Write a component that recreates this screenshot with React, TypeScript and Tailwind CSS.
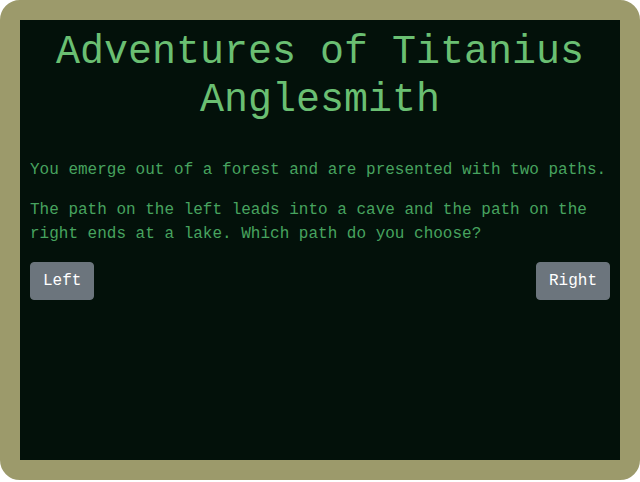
import React from 'react'

const mono = { fontFamily: '"Liberation Mono", "Courier New", monospace' }

export default function App() {
  return (
    <div
      className="w-[640px] h-[480px] rounded-[20px] border-[20px] border-[#9c9a6b] bg-[#03110a] px-[10px] pt-[9px]"
      style={mono}
    >
      <h1 className="text-center text-[40px] leading-[48px] text-[#6abf72] mb-[33px]">
        Adventures of Titanius Anglesmith
      </h1>
      <p className="text-base leading-6 text-[#47a35f] mb-4">
        You emerge out of a forest and are presented with two paths.
      </p>
      <p className="text-base leading-6 text-[#47a35f] mb-4">
        The path on the left leads into a cave and the path on the right ends at a lake. Which path do you choose?
      </p>
      <div className="flex justify-between">
        <button className="h-[38px] px-3 rounded bg-[#6c757d] border border-[#6c757d] text-white text-base leading-6">
          Left
        </button>
        <button className="h-[38px] px-3 rounded bg-[#6c757d] border border-[#6c757d] text-white text-base leading-6">
          Right
        </button>
      </div>
    </div>
  )
}
